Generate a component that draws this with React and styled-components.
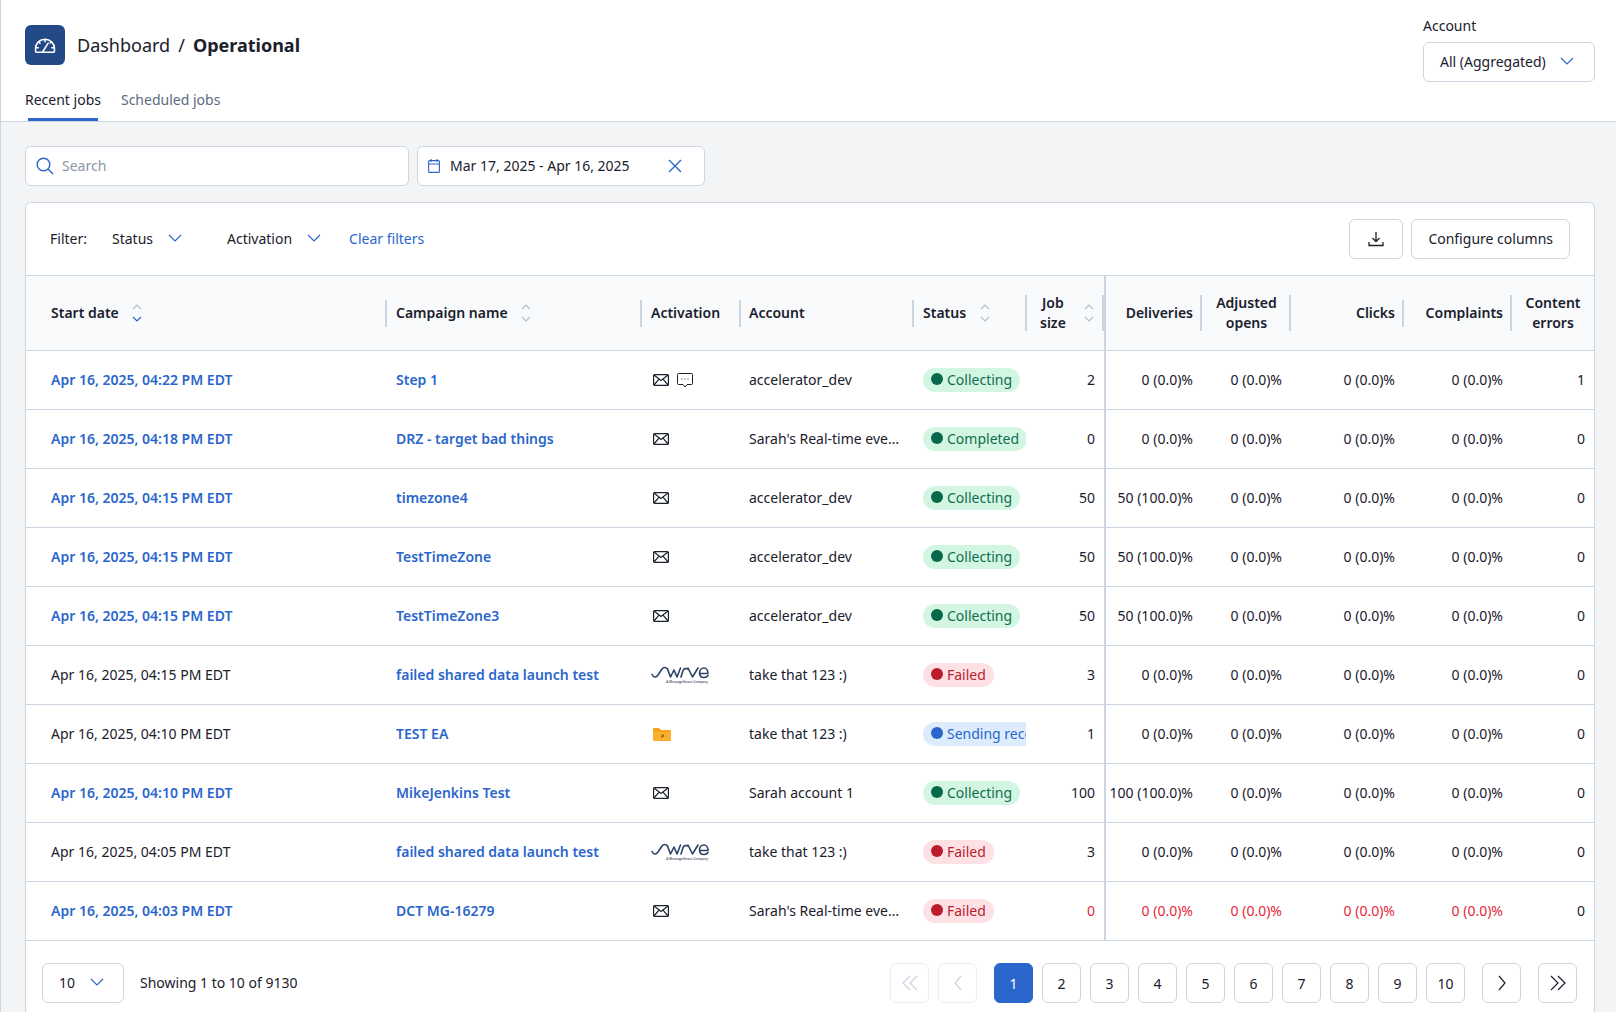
import React from "react";
import styled, { createGlobalStyle } from "styled-components";

const LINK = "#2a66cc";
const TEXT = "#1a202c";
const LINE = "#cbd5e1";

const GlobalStyle = createGlobalStyle`
  html, body {
    margin: 0;
    height: 1012px;
    overflow: hidden;
    background: #f3f4f6;
    font-family: "Noto Sans", "Liberation Sans", sans-serif;
    font-size: 14px;
    color: ${TEXT};
  }
  * { box-sizing: border-box; }
`;

const jobs = [
  { date: "Apr 16, 2025, 04:22 PM EDT", link: true, name: "Step 1", act: ["mail", "sms"], account: "accelerator_dev", status: "Collecting", size: 2, del: "0 (0.0)%", errors: 1 },
  { date: "Apr 16, 2025, 04:18 PM EDT", link: true, name: "DRZ - target bad things", act: ["mail"], account: "Sarah's Real-time events", status: "Completed", size: 0, del: "0 (0.0)%", errors: 0 },
  { date: "Apr 16, 2025, 04:15 PM EDT", link: true, name: "timezone4", act: ["mail"], account: "accelerator_dev", status: "Collecting", size: 50, del: "50 (100.0)%", errors: 0 },
  { date: "Apr 16, 2025, 04:15 PM EDT", link: true, name: "TestTimeZone", act: ["mail"], account: "accelerator_dev", status: "Collecting", size: 50, del: "50 (100.0)%", errors: 0 },
  { date: "Apr 16, 2025, 04:15 PM EDT", link: true, name: "TestTimeZone3", act: ["mail"], account: "accelerator_dev", status: "Collecting", size: 50, del: "50 (100.0)%", errors: 0 },
  { date: "Apr 16, 2025, 04:15 PM EDT", name: "failed shared data launch test", act: ["swrve"], account: "take that 123 :)", status: "Failed", size: 3, del: "0 (0.0)%", errors: 0 },
  { date: "Apr 16, 2025, 04:10 PM EDT", name: "TEST EA", act: ["folder"], account: "take that 123 :)", status: "Sending records", size: 1, del: "0 (0.0)%", errors: 0 },
  { date: "Apr 16, 2025, 04:10 PM EDT", link: true, name: "MikeJenkins Test", act: ["mail"], account: "Sarah account 1", status: "Collecting", size: 100, del: "100 (100.0)%", errors: 0 },
  { date: "Apr 16, 2025, 04:05 PM EDT", name: "failed shared data launch test", act: ["swrve"], account: "take that 123 :)", status: "Failed", size: 3, del: "0 (0.0)%", errors: 0 },
  { date: "Apr 16, 2025, 04:03 PM EDT", link: true, name: "DCT MG-16279", act: ["mail"], account: "Sarah's Real-time events", status: "Failed", size: 0, del: "0 (0.0)%", errors: 0, zero: true },
];

const widths = [360, 255, 99, 173, 113, 78, 97, 89, 113, 108, 84];

const statusColors = {
  Collecting: { bg: "#d3f6e3", fg: "#0f6e4e", dot: "#07694a" },
  Completed: { bg: "#d3f6e3", fg: "#0f6e4e", dot: "#07694a" },
  Failed: { bg: "#fde1e4", fg: "#b91c2e", dot: "#bb1b2d" },
  "Sending records": { bg: "#dcecfd", fg: "#2a66cc", dot: "#2a66cc" },
};

const Page = styled.div`
  height: 1012px;
  overflow: hidden;
  border-left: 1px solid ${LINE};
`;

const Header = styled.header`
  height: 122px;
  display: flex;
  justify-content: space-between;
  padding: 0 21px 0 24px;
  background: #fff;
  border-bottom: 1px solid ${LINE};
`;

const HeaderLeft = styled.div`
  display: flex;
  flex-direction: column;
`;

const TitleRow = styled.div`
  display: flex;
  align-items: center;
  gap: 12px;
  margin-top: 25px;
  height: 40px;
`;

const LogoBox = styled.div`
  width: 40px;
  height: 40px;
  border-radius: 6px;
  background: #234a86;
  display: flex;
  align-items: center;
  justify-content: center;
`;

const Title = styled.h1`
  margin: 0;
  font-size: 18px;
  font-weight: 400;
  line-height: 28px;
  white-space: nowrap;
  b { font-weight: 700; }
`;

const Slash = styled.span`
  margin: 0 8px;
`;

const Tabs = styled.nav`
  display: flex;
  gap: 20px;
  margin-top: 24px;
`;

const Tab = styled.div`
  position: relative;
  height: 32px;
  line-height: 22px;
  font-size: 14px;
  color: ${({ $active }) => ($active ? TEXT : "#5b6b82")};
  &::after {
    content: "";
    display: ${({ $active }) => ($active ? "block" : "none")};
    position: absolute;
    left: 3px;
    right: 3px;
    bottom: 0;
    height: 3px;
    background: ${LINK};
  }
`;

const AccountBlock = styled.div`
  padding-top: 16px;
  width: 172px;
`;

const FieldLabel = styled.div`
  font-size: 14px;
  line-height: 20px;
  margin-bottom: 6px;
`;

const Select = styled.div`
  height: 40px;
  width: ${({ $w }) => $w || "100%"};
  display: flex;
  align-items: center;
  justify-content: space-between;
  padding: 0 ${({ $pr }) => $pr || 20}px 2px 16px;
  background: #fff;
  border: 1px solid ${LINE};
  border-radius: 6px;
  font-size: 14px;
`;

const Body = styled.main`
  padding: 24px 21px 0 24px;
`;

const SearchRow = styled.div`
  display: flex;
  gap: 8px;
  height: 40px;
`;

const Field = styled.div`
  width: ${({ $w }) => $w}px;
  display: flex;
  align-items: center;
  gap: ${({ $gap }) => $gap}px;
  padding: 0 22px 1px 10px;
  background: #fff;
  border: 1px solid ${LINE};
  border-radius: 6px;
  font-size: 14px;
`;

const Placeholder = styled.span`
  color: #8a96a8;
`;

const DateText = styled.span`
  flex: 1;
  white-space: nowrap;
`;

const Card = styled.section`
  margin-top: 16px;
  background: #fff;
  border: 1px solid ${LINE};
  border-bottom: 0;
  border-radius: 6px 6px 0 0;
  overflow: hidden;
`;

const FilterBar = styled.div`
  height: 73px;
  display: flex;
  align-items: center;
  padding: 0 24px;
  border-bottom: 1px solid ${LINE};
`;

const FilterLabel = styled.span`
  width: 62px;
  padding-bottom: 2px;
`;

const FilterDrop = styled.div`
  display: flex;
  align-items: center;
  gap: ${({ $gap }) => $gap}px;
  margin-right: ${({ $mr }) => $mr}px;
  padding-bottom: 2px;
`;

const ClearLink = styled.a`
  color: ${LINK};
  padding-bottom: 2px;
`;

const BarActions = styled.div`
  margin-left: auto;
  display: flex;
  gap: 8px;
`;

const Button = styled.button`
  height: 40px;
  padding: ${({ $icon }) => ($icon ? "0" : "0 16px 2px")};
  width: ${({ $icon }) => ($icon ? "54px" : "auto")};
  display: flex;
  align-items: center;
  justify-content: center;
  background: #fff;
  border: 1px solid ${LINE};
  border-radius: 6px;
  font: inherit;
  color: ${TEXT};
`;

const Table = styled.table`
  width: 1569px;
  table-layout: fixed;
  border-collapse: separate;
  border-spacing: 0;
`;

const Th = styled.th`
  height: 75px;
  padding: 0;
  background: #f8fafc;
  font-weight: 600;
  font-size: 14px;
  line-height: 20px;
  border-bottom: 1px solid ${LINE};
  border-left: ${({ $split }) => ($split ? `2px solid ${LINE}` : "0")};
  vertical-align: middle;
`;

const ThInner = styled.div`
  height: ${({ $tall }) => ($tall ? 36 : 27)}px;
  display: flex;
  align-items: center;
  justify-content: ${({ $justify }) => $justify || "flex-start"};
  gap: ${({ $gap }) => $gap || 13}px;
  margin-left: ${({ $first }) => ($first ? 0 : -1)}px;
  padding: 0 ${({ $pr }) => $pr || 8}px 0 ${({ $first, $pl }) => ($first ? 25 : $pl || 9)}px;
  border-left: ${({ $first }) => ($first ? "0" : `2px solid ${LINE}`)};
  border-right: ${({ $rule }) => ($rule ? `2px solid ${LINE}` : "0")};
  text-align: ${({ $center }) => ($center ? "center" : "left")};
  white-space: nowrap;
`;

const Td = styled.td`
  height: 59px;
  padding: ${({ $first, $right, $pr, $pl }) =>
    $first ? "0 0 2px 25px" : `0 ${$pr || 8}px 2px ${$right ? 0 : $pl || 10}px`};
  border-bottom: 1px solid ${LINE};
  border-left: ${({ $split }) => ($split ? `2px solid ${LINE}` : "0")};
  text-align: ${({ $right }) => ($right ? "right" : "left")};
  color: ${({ $red }) => ($red ? "#e5283c" : "inherit")};
  white-space: nowrap;
  overflow: hidden;
`;

const StatusTd = styled(Td)`
  padding: 0 0 0 10px;
`;

const RowLink = styled.a`
  color: ${LINK};
  font-weight: 600;
`;

const Truncate = styled.div`
  max-width: 152px;
  overflow: hidden;
  text-overflow: ellipsis;
`;

const Icons = styled.div`
  display: flex;
  align-items: center;
  gap: 8px;
  padding-top: 2px;
  padding-left: ${({ $pad }) => $pad}px;
`;

const Badge = styled.span`
  display: inline-flex;
  align-items: center;
  gap: 4px;
  height: 24px;
  padding: 0 8px 2px;
  border-radius: 12px;
  background: ${({ $bg }) => $bg};
  color: ${({ $fg }) => $fg};
  vertical-align: middle;
`;

const Dot = styled.i`
  width: 12px;
  height: 12px;
  border-radius: 50%;
  background: ${({ $c }) => $c};
`;

const Footer = styled.div`
  height: 72px;
  display: flex;
  align-items: flex-start;
  padding: 22px 17px 0 16px;
  background: #fff;
`;

const Showing = styled.span`
  margin-left: 16px;
  line-height: 40px;
`;

const Pager = styled.div`
  margin-left: auto;
  display: flex;
  gap: 9px;
`;

const PageBtn = styled.button`
  width: 39px;
  height: 40px;
  padding: 0;
  margin-left: ${({ $ml }) => $ml || 0}px;
  display: flex;
  align-items: center;
  justify-content: center;
  font: inherit;
  border-radius: 6px;
  color: ${({ $on }) => ($on ? "#fff" : TEXT)};
  background: ${({ $on }) => ($on ? LINK : "#fff")};
  border: 1px solid ${({ $on, $off }) => ($on ? LINK : $off ? "#e9edf2" : LINE)};
`;

const Chevron = ({ dir = "down", w = 14, h = 8, color = LINK }) => {
  const points = {
    down: `1,1 ${w / 2},${h - 1} ${w - 1},1`,
    up: `1,${h - 1} ${w / 2},1 ${w - 1},${h - 1}`,
  }[dir];
  return (
    <svg width={w} height={h} viewBox={`0 0 ${w} ${h}`} fill="none" stroke={color} strokeWidth="1.2">
      <polyline points={points} />
    </svg>
  );
};

const SortWrap = styled.span`
  display: flex;
  flex-direction: column;
  gap: 6px;
  flex: none;
`;

const Sort = ({ active }) => (
  <SortWrap>
    <Chevron dir="up" w={10} h={6} color="#b4bdca" />
    <Chevron w={10} h={6} color={active ? LINK : "#b4bdca"} />
  </SortWrap>
);

const Side = ({ d, color = TEXT, w = 16 }) => (
  <svg width={w} height="16" viewBox={`0 0 ${w} 16`} fill="none" stroke={color} strokeWidth="1.2">
    {d.map((p) => (
      <polyline key={p} points={p} />
    ))}
  </svg>
);

const GaugeIcon = () => (
  <svg width="22" height="18" viewBox="0 0 24 20" fill="none" stroke="#fff" strokeWidth="1.7" strokeLinecap="round" strokeLinejoin="round">
    <path d="M1.5 17.500v-3a10.500 10.500 0 1 1 21 0v3a1 1 0 0 1-1 1h-19a1 1 0 0 1-1-1z" transform="translate(0 -0.500)" />
    <path d="M9.500 17.500l6-9.500" />
    <path d="M12 4v2.500M5 6.500l1.500 1.500M19 6.500l-1.200 1.200M2 13h2.500M19.500 13H22" />
  </svg>
);

const MailIcon = () => (
  <svg width="16" height="12" viewBox="0 0 16 12" fill="none" stroke={TEXT} strokeWidth="1.2">
    <rect x="0.6" y="0.6" width="14.8" height="10.8" rx="1" />
    <path d="M1 1l7 5.500L15 1M1 11l5-5.800M15 11l-5-5.800" />
  </svg>
);

const SmsIcon = () => (
  <svg width="16" height="15" viewBox="0 0 16 15" fill="none" stroke={TEXT} strokeWidth="1">
    <path d="M1.500 0.500h13a1 1 0 0 1 1 1v9a1 1 0 0 1-1 1h-4.500l-2 2.500-2-2.500H1.500a1 1 0 0 1-1-1v-9a1 1 0 0 1 1-1z" />
    <path d="M4.500 6h1M7.500 6h1M10.500 6h1" strokeWidth="1.2" />
  </svg>
);

const SwrveLogo = () => (
  <svg width="58" height="18" viewBox="0 0 58 18" fill="none">
    <g stroke="#2b4364" strokeWidth="1.6" strokeLinecap="round" strokeLinejoin="round">
      <path d="M1 8.500C2.500 11.500 5 12 7 9l4-6c1.500-2 4-2 5.500 0" />
      <path d="M16.500 3l3 8 3.500-7 3 7 3.500-9" />
      <path d="M30 11l2-6.500c1-2 3-2.500 4.500-1.500" />
      <path d="M37 2l4.500 9L47 2" />
      <path d="M48.500 7.500H57C57 4 55 2 53 2c-3 0-4.500 2.500-4.500 5 0 3 2 4.500 4.500 4.500 1.500 0 3-.5 4-2" />
    </g>
    <text x="15" y="16.500" fontSize="3.400" fontWeight="600" fill="#55606f" fontFamily="Noto Sans" textLength="42" lengthAdjust="spacingAndGlyphs">A MessageGears Company</text>
  </svg>
);

const FolderIcon = () => (
  <svg width="18" height="14" viewBox="0 0 18 14">
    <path d="M0 2a1 1 0 0 1 1-1h5l2 2h9a1 1 0 0 1 1 1v9a1 1 0 0 1-1 1H1a1 1 0 0 1-1-1z" fill="#f5a31a" />
    <path d="M0 5h18v8a1 1 0 0 1-1 1H1a1 1 0 0 1-1-1z" fill="#fbb02d" />
    <path d="M8 10.500l2.500-2.500M8.500 8h2v2" stroke="#a8650c" strokeWidth="1.100" fill="none" />
  </svg>
);

const activationIcons = {
  mail: <MailIcon key="mail" />,
  sms: <SmsIcon key="sms" />,
  swrve: <SwrveLogo key="swrve" />,
  folder: <FolderIcon key="folder" />,
};

export default function App() {
  return (
    <Page>
      <GlobalStyle />
      <Header>
        <HeaderLeft>
          <TitleRow>
            <LogoBox>
              <GaugeIcon />
            </LogoBox>
            <Title>
              Dashboard<Slash>/</Slash>
              <b>Operational</b>
            </Title>
          </TitleRow>
          <Tabs>
            <Tab $active>Recent jobs</Tab>
            <Tab>Scheduled jobs</Tab>
          </Tabs>
        </HeaderLeft>
        <AccountBlock>
          <FieldLabel>Account</FieldLabel>
          <Select>
            All (Aggregated)
            <Chevron />
          </Select>
        </AccountBlock>
      </Header>
      <Body>
        <SearchRow>
          <Field $w={384} $gap={8}>
            <svg width="18" height="18" viewBox="0 0 18 18" fill="none" stroke={LINK} strokeWidth="1.4">
              <circle cx="7.500" cy="7.500" r="6.300" />
              <path d="M12 12l5 5" />
            </svg>
            <Placeholder>Search</Placeholder>
          </Field>
          <Field $w={288} $gap={10}>
            <svg width="12" height="14" viewBox="0 0 12 14" fill="none" stroke={LINK} strokeWidth="1.1">
              <rect x="0.600" y="1.600" width="10.800" height="11.800" rx="1" />
              <path d="M0.600 5h10.800M3 0v3M9 0v3" />
            </svg>
            <DateText>Mar 17, 2025 - Apr 16, 2025</DateText>
            <svg width="14" height="14" viewBox="0 0 14 14" fill="none" stroke={LINK} strokeWidth="1.400">
              <path d="M1 1l12 12M13 1L1 13" />
            </svg>
          </Field>
        </SearchRow>
        <Card>
          <FilterBar>
            <FilterLabel>Filter:</FilterLabel>
            <FilterDrop $gap={15} $mr={45}>
              Status
              <Chevron />
            </FilterDrop>
            <FilterDrop $gap={15} $mr={28}>
              Activation
              <Chevron />
            </FilterDrop>
            <ClearLink>Clear filters</ClearLink>
            <BarActions>
              <Button $icon>
                <svg width="16" height="16" viewBox="0 0 16 16" fill="none" stroke={TEXT} strokeWidth="1.300">
                  <path d="M8 1v9M4.500 7L8 10.500 11.500 7" />
                  <path d="M1 11v3.500h14V11" />
                </svg>
              </Button>
              <Button>Configure columns</Button>
            </BarActions>
          </FilterBar>
          <Table>
            <colgroup>
              {widths.map((w, i) => (
                <col key={i} style={{ width: w }} />
              ))}
            </colgroup>
            <thead>
              <tr>
                <Th>
                  <ThInner $first>
                    Start date
                    <Sort active />
                  </ThInner>
                </Th>
                <Th>
                  <ThInner>
                    Campaign name
                    <Sort />
                  </ThInner>
                </Th>
                <Th>
                  <ThInner>Activation</ThInner>
                </Th>
                <Th>
                  <ThInner $pl={8}>Account</ThInner>
                </Th>
                <Th>
                  <ThInner $gap={14}>
                    Status
                    <Sort />
                  </ThInner>
                </Th>
                <Th>
                  <ThInner $tall $center $gap={18} $rule $pl={13} $pr={7}>
                    <span>
                      Job
                      <br />
                      size
                    </span>
                    <Sort />
                  </ThInner>
                </Th>
                <Th $split>
                  <ThInner $first $justify="flex-end">
                    Deliveries
                  </ThInner>
                </Th>
                <Th>
                  <ThInner $tall $center $justify="center">
                    <span>
                      Adjusted
                      <br />
                      opens
                    </span>
                  </ThInner>
                </Th>
                <Th>
                  <ThInner $tall $justify="flex-end">
                    Clicks
                  </ThInner>
                </Th>
                <Th>
                  <ThInner $justify="flex-end">Complaints</ThInner>
                </Th>
                <Th>
                  <ThInner $tall $center $justify="center" $pr={10}>
                    <span>
                      Content
                      <br />
                      errors
                    </span>
                  </ThInner>
                </Th>
              </tr>
            </thead>
            <tbody>
              {jobs.map((job, i) => {
                const colors = statusColors[job.status];
                return (
                  <tr key={i}>
                    <Td $first>{job.link ? <RowLink>{job.date}</RowLink> : job.date}</Td>
                    <Td>
                      <RowLink>{job.name}</RowLink>
                    </Td>
                    <Td>
                      <Icons $pad={job.act[0] === "swrve" ? 0 : 2}>{job.act.map((a) => activationIcons[a])}</Icons>
                    </Td>
                    <Td $pl={9}>
                      <Truncate>{job.account}</Truncate>
                    </Td>
                    <StatusTd>
                      <Badge $bg={colors.bg} $fg={colors.fg}>
                        <Dot $c={colors.dot} />
                        {job.status}
                      </Badge>
                    </StatusTd>
                    <Td $right $pr={9} $red={job.zero}>
                      {job.size}
                    </Td>
                    <Td $right $split $red={job.zero}>
                      {job.del}
                    </Td>
                    <Td $right $red={job.zero}>
                      0 (0.0)%
                    </Td>
                    <Td $right $red={job.zero}>
                      0 (0.0)%
                    </Td>
                    <Td $right $red={job.zero}>
                      0 (0.0)%
                    </Td>
                    <Td $right $pr={10}>
                      {job.errors}
                    </Td>
                  </tr>
                );
              })}
            </tbody>
          </Table>
          <Footer>
            <Select $w="82px" $pr={19}>
              10
              <Chevron />
            </Select>
            <Showing>Showing 1 to 10 of 9130</Showing>
            <Pager>
              <PageBtn $off>
                <Side w={18} color="#cbd3de" d={["9,1 2,8 9,15", "16,1 9,8 16,15"]} />
              </PageBtn>
              <PageBtn $off>
                <Side w={10} color="#cbd3de" d={["8,1 2,8 8,15"]} />
              </PageBtn>
              {[1, 2, 3, 4, 5, 6, 7, 8, 9, 10].map((n) => (
                <PageBtn key={n} $on={n === 1} $ml={n === 1 ? 8 : 0}>
                  {n}
                </PageBtn>
              ))}
              <PageBtn $ml={8}>
                <Side w={10} d={["2,1 8,8 2,15"]} />
              </PageBtn>
              <PageBtn $ml={8}>
                <Side w={18} d={["2,1 9,8 2,15", "9,1 16,8 9,15"]} />
              </PageBtn>
            </Pager>
          </Footer>
        </Card>
      </Body>
    </Page>
  );
}
